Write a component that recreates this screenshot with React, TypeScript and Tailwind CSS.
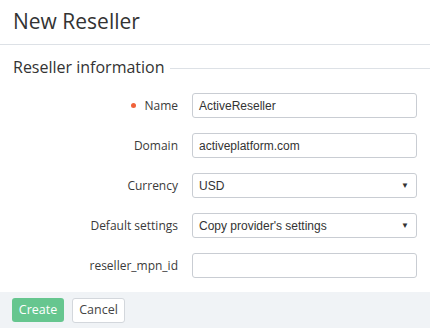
import React from 'react'

const fields = [
  { label: 'Name', value: 'ActiveReseller', required: true },
  { label: 'Domain', value: 'activeplatform.com' },
  { label: 'Currency', value: 'USD', select: true },
  { label: 'Default settings', value: "Copy provider's settings", select: true },
  { label: 'reseller_mpn_id', value: '' }
]

export default function App() {
  return (
    <div className="w-[430px] h-[328px] bg-white flex flex-col font-['Open_Sans',sans-serif] text-[#333]">
      <div className="h-[45px] border-b border-[#dde1e6] px-[13px] flex items-center">
        <h1 className="text-[21px] leading-[30px] font-normal text-[#333] mb-[2px]">New Reseller</h1>
      </div>

      <div className="flex items-center pl-[13px] mt-[10px] h-[24px]">
        <h2 className="text-[16px] leading-[24px] text-[#333] whitespace-nowrap">Reseller information</h2>
        <div className="flex-1 border-t border-[#dde1e6] ml-[5px] mt-[2px]" />
      </div>

      <div className="flex flex-col gap-[15px] mt-[14px]">
        {fields.map(f => (
          <div key={f.label} className="flex items-center h-[25px]">
            <div className="w-[178px] flex items-center justify-end text-[12px] text-[#3a3a3a]">
              {f.required && <span className="w-[5px] h-[5px] rounded-full bg-[#f0623a] mr-[8px]" />}
              {f.label}
            </div>
            <div className="ml-[14px] w-[225px] h-[25px] border border-[#c9cdd3] rounded-[3px] flex items-center pl-[6px] pr-[8px] font-['Liberation_Sans',Arial,sans-serif] text-[12px] text-[#333]">
              <span className="flex-1">{f.value}</span>
              {f.select && <span className="text-[8px] text-[#333] mr-[-1px]">▼</span>}
            </div>
          </div>
        ))}
      </div>

      <div className="mt-auto h-[36px] bg-[#f0f3f6] flex items-center gap-[8px] px-[12px]">
        <button className="h-[24px] w-[52px] rounded-[3px] bg-[#66c68f] text-white text-[12.5px]">Create</button>
        <button className="h-[25px] w-[53px] rounded-[3px] bg-white border border-[#d3d7dc] text-[12.5px] text-[#444]">Cancel</button>
      </div>
    </div>
  )
}
